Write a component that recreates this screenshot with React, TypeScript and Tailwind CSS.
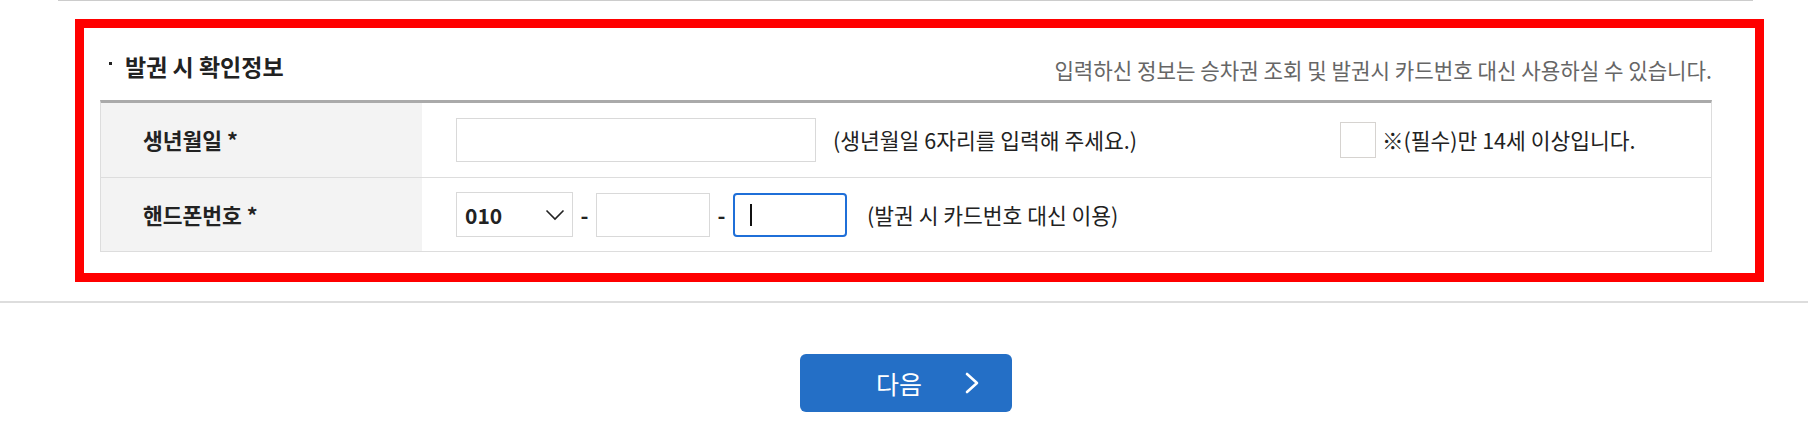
import { ChangeEvent, useState } from "react";

const Chevron = () => (
  <svg width="20" height="12" viewBox="0 0 20 12" fill="none">
    <polyline points="1.5,1.5 10,10 18.5,1.5" stroke="#222" strokeWidth="1.6" />
  </svg>
);

const App = () => {
  const [birth, setBirth] = useState("");
  const [mid, setMid] = useState("");

  return (
    <div className="w-[1808px] h-[436px] bg-white font-['Noto_Sans_CJK_KR',sans-serif] text-[#222]">
      <div className="ml-[58px] w-[1695px] h-px bg-[#cccccc]" />

      {/* 발권 시 확인정보 */}
      <div className="ml-[75px] mt-[18px] w-[1689px] h-[263px] border-[9px] border-[#ff0000] pl-[16px] pr-[43px]">
        <div className="h-[72px] flex justify-between">
          <div className="flex items-start pl-[9px] mt-[25px]">
            <div className="w-[3px] h-[3px] bg-[#222] mt-[9px]" />
            <div className="ml-[13px] text-[23px] leading-[26px] font-bold">발권 시 확인정보</div>
          </div>
          <div className="mt-[29px] text-[21.2px] leading-[26px] text-[#666]">
            입력하신 정보는 승차권 조회 및 발권시 카드번호 대신 사용하실 수 있습니다.
          </div>
        </div>

        <div className="border-t-[3px] border-t-[#aaaaaa] border-x border-x-[#dddddd] text-[21.5px] leading-[26px]">
          <div className="flex h-[75px] border-b border-[#dddddd]">
            <div className="w-[321px] shrink-0 bg-[#f3f3f3] pl-[42px] flex items-center font-bold">생년월일 *</div>
            <div className="flex items-center pl-[34px]">
              <div className="w-[884px] shrink-0 flex items-center">
                <input
                  value={birth}
                  onChange={(e: ChangeEvent<HTMLInputElement>) => setBirth(e.target.value)}
                  className="w-[360px] h-[44px] border border-[#d9d9d9] px-3 outline-none"
                />
                <span className="ml-[17px]">(생년월일 6자리를 입력해 주세요.)</span>
              </div>
              <div className="w-[36px] h-[36px] border border-[#d6d3d0] bg-white" />
              <span className="ml-[6px]">※(필수)만 14세 이상입니다.</span>
            </div>
          </div>

          <div className="flex h-[74px] border-b border-[#dddddd]">
            <div className="w-[321px] shrink-0 bg-[#f3f3f3] pl-[42px] flex items-center font-bold">핸드폰번호 *</div>
            <div className="flex items-center pl-[34px]">
              <div className="w-[117px] h-[45px] border border-[#d9d9d9] flex items-center justify-between pl-[8px] pr-[7px]">
                <span className="font-semibold text-[21px]">010</span>
                <Chevron />
              </div>
              <span className="w-[23px] text-center font-semibold">-</span>
              <input
                value={mid}
                onChange={(e: ChangeEvent<HTMLInputElement>) => setMid(e.target.value)}
                className="w-[114px] h-[44px] border border-[#d9d9d9] px-3 outline-none"
              />
              <span className="w-[23px] text-center font-semibold">-</span>
              <div className="w-[114px] h-[44px] border-2 border-[#1f6fd8] rounded-[4px] flex items-center pl-[15px]">
                <div className="w-[2px] h-[22px] bg-[#111]" />
              </div>
              <span className="ml-[20px]">(발권 시 카드번호 대신 이용)</span>
            </div>
          </div>
        </div>
      </div>

      <div className="mt-[19px] h-[2px] bg-[#dddddd]" />

      <div className="mt-[51px] flex justify-center pl-[4px]">
        <button className="w-[212px] h-[58px] bg-[#246fc6] rounded-[6px] flex items-center pl-[76px] text-white">
          <span className="text-[25px] leading-none">다음</span>
          <svg className="ml-[43px]" width="14" height="22" viewBox="0 0 14 22" fill="none">
            <polyline points="2,2 12,11 2,20" stroke="#fff" strokeWidth="2.6" strokeLinecap="round" strokeLinejoin="round" />
          </svg>
        </button>
      </div>
    </div>
  );
};

export default App;
